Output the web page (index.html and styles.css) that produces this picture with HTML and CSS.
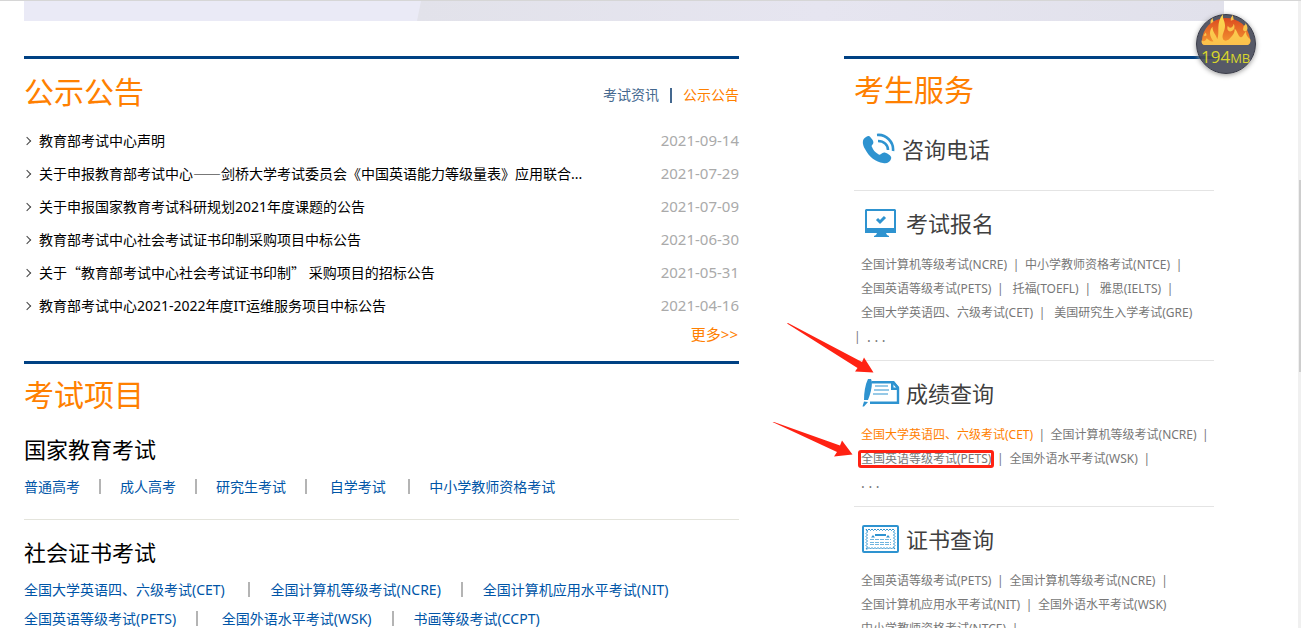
FILE: index.html
```html
<!DOCTYPE html>
<html lang="zh-CN">
<head>
<meta charset="utf-8">
<title>教育部考试中心</title>
<link rel="stylesheet" href="styles.css">
</head>
<body>
<div class="banner">
  <svg class="banner-art" viewBox="0 0 1200 20" preserveAspectRatio="none" aria-hidden="true"><defs><linearGradient id="bg" x1="0" x2="1"><stop offset="0" stop-color="#e2e2ea"/><stop offset=".5" stop-color="#e6e5f0"/><stop offset="1" stop-color="#e1e1eb"/></linearGradient></defs><path fill="url(#bg)" d="M397 0H1200V20H393Z"/></svg>
</div>
<div class="page">
  <main class="main">
    <section class="panel news">
      <header class="news-head">
        <h2 class="title">公示公告</h2>
        <nav class="tabs"><a class="tab" href="#">考试资讯</a><span class="tab-sep"></span><a class="tab tab-active" href="#">公示公告</a></nav>
      </header>
      <ul class="news-list">
        <li class="news-item"><a class="news-link" href="#">教育部考试中心声明</a><time class="date">2021-09-14</time></li>
        <li class="news-item"><a class="news-link" href="#">关于申报教育部考试中心<span class="cjk">——</span>剑桥大学考试委员会《中国英语能力等级量表》应用联合...</a><time class="date">2021-07-29</time></li>
        <li class="news-item"><a class="news-link" href="#">关于申报国家教育考试科研规划2021年度课题的公告</a><time class="date">2021-07-09</time></li>
        <li class="news-item"><a class="news-link" href="#">教育部考试中心社会考试证书印制采购项目中标公告</a><time class="date">2021-06-30</time></li>
        <li class="news-item"><a class="news-link" href="#">关于<span class="cjk">“</span>教育部考试中心社会考试证书印制<span class="cjk">”</span> 采购项目的招标公告</a><time class="date">2021-05-31</time></li>
        <li class="news-item"><a class="news-link" href="#">教育部考试中心2021-2022年度IT运维服务项目中标公告</a><time class="date">2021-04-16</time></li>
      </ul>
      <a class="more" href="#">更多&gt;&gt;</a>
    </section>
    <section class="panel">
      <h2 class="title title-projects">考试项目</h2>
      <div class="group">
        <h3 class="subtitle">国家教育考试</h3>
        <div class="links"><a href="#">普通高考</a><i class="bar"></i><a href="#">成人高考</a><i class="bar"></i><a href="#">研究生考试</a><i class="bar"></i><a href="#">&nbsp;自学考试&nbsp;</a><i class="bar"></i><a href="#">中小学教师资格考试</a></div>
      </div>
      <div class="group group-certs">
        <h3 class="subtitle">社会证书考试</h3>
        <div class="links"><a href="#">全国大学英语四、六级考试(CET)&nbsp;</a><i class="bar"></i><a href="#">全国计算机等级考试(NCRE)</a><i class="bar"></i><a href="#">全国计算机应用水平考试(NIT)</a></div>
        <div class="links"><a href="#">全国英语等级考试(PETS)</a><i class="bar"></i><a href="#">&nbsp;全国外语水平考试(WSK)</a><i class="bar"></i><a href="#">书画等级考试(CCPT)</a></div>
      </div>
    </section>
  </main>
  <aside class="panel side">
    <h2 class="title">考生服务</h2>
    <section class="service">
      <h3 class="service-title service-phone">
        <svg class="icon" viewBox="0 0 34 32" aria-hidden="true"><path fill="#2e93d0" d="M4 4C0 6 0 11 3 16c4 8 11 13 18 14 4 1 7-1 8-4 1-2-1-4-3-5-3-2-5-2-7 0-1 1-2 1-3 0-3-2-5-4-6-7-1-1 0-2 1-3 1-2 0-4-2-6C7 2 6 3 4 4Z"/><g fill="none" stroke="#2e93d0" stroke-width="2.6"><path d="M15 2c9-1 17 7 16 16M16 8c6 0 10 4 10 9"/></g></svg>
        咨询电话</h3>
    </section>
    <section class="service">
      <h3 class="service-title">
        <svg class="icon icon-wide" viewBox="0 0 38 32" aria-hidden="true"><path fill="#2e93d0" d="M4 2h29l1 1v23H24l1 2 2 1v1H12v-1l2-1 1-2H3V3Zm1 2v17h27V4Z"/><path d="m15 12 3 3 5-5" fill="none" stroke="#2e93d0" stroke-width="3"/></svg>
        考试报名</h3>
      <p class="row"><a href="#">全国计算机等级考试(NCRE)</a><b>|</b><a href="#">中小学教师资格考试(NTCE)</a><b>|</b></p>
      <p class="row"><a href="#">全国英语等级考试(PETS)</a><b>|</b><a href="#">&nbsp;托福(TOEFL)</a><b>|</b><a href="#">&nbsp;雅思(IELTS)</a><b>|</b></p>
      <p class="row"><a href="#">全国大学英语四、六级考试(CET)</a><b>|</b><a href="#">&nbsp;美国研究生入学考试(GRE)</a></p>
      <p class="row row-wrapped"><b>|</b><a class="dots" href="#">. . .</a></p>
    </section>
    <section class="service">
      <h3 class="service-title">
        <svg class="icon icon-wide" viewBox="0 0 38 32" aria-hidden="true"><path fill="none" stroke="#2e93d0" stroke-width="2.4" d="M10 5.200H31L36 11v14.800H8"/><path fill="#2e93d0" d="M29 4h3l5 6v3h-8Zm2.500 3v3.500h3Z"/><path fill="#2e93d0" d="m6 2 3 0 1 3c0 6-2 13-4 18l-4 0C2 16 3 8 6 2ZM2 24.500l4 .5-4 4.500H.5Z"/><path stroke="#2e93d0" stroke-width="1.200" d="M13 9h13M12 13h15M11 17h15"/></svg>
        成绩查询</h3>
      <p class="row"><a class="hot" href="#">全国大学英语四、六级考试(CET)</a><b>|</b><a href="#">全国计算机等级考试(NCRE)</a><b>|</b></p>
      <p class="row"><a class="marked" href="#">全国英语等级考试(PETS)</a><b>|</b><a href="#">全国外语水平考试(WSK)</a><b>|</b></p>
      <p class="row row-dots"><a class="dots" href="#">. . .</a></p>
    </section>
    <section class="service">
      <h3 class="service-title">
        <svg class="icon icon-wide" viewBox="0 0 38 32" aria-hidden="true"><rect x="1" y="3" width="35" height="26" rx="1" fill="#fff" stroke="#2e93d0" stroke-width="2"/><path fill="none" stroke="#2e93d0" stroke-width="1" d="m4 6 1.500 1.500L7 6l1.500 1.500L10 6l1.500 1.500L13 6l1.500 1.500L16 6l1.500 1.500L19 6l1.500 1.500L22 6l1.500 1.500L25 6l1.500 1.500L28 6l1.500 1.500L31 6l1.500 1.500L31.500 9 33 10.500 31.500 12 33 13.500 31.500 15 33 16.500 31.500 18 33 19.500 31.500 21 33 22.500 31.500 24 33 26l-2-1.500L29.500 26 28 24.500 26.500 26 25 24.500 23.500 26 22 24.500 20.500 26 19 24.500 17.500 26 16 24.500 14.500 26 13 24.500 11.500 26 10 24.500 8.500 26 7 24.500 5.500 26 4 26l1.500-2L4 22.500 5.500 21 4 19.500 5.500 18 4 16.500 5.500 15 4 13.500 5.500 12 4 10.500 5.500 9Z"/><path stroke="#2e93d0" stroke-width="2" d="M13 12h11"/><path fill="#2e93d0" d="M9 14.500l2-2.500 2 2.500ZM24 14.500l2-2.500 2 2.500Z"/><path stroke="#6fb5df" stroke-width="1" stroke-dasharray="4 1" d="M8 16.500h21M8 19.500h21M8 21.500h21"/></svg>
        证书查询</h3>
      <p class="row"><a href="#">全国英语等级考试(PETS)</a><b>|</b><a href="#">全国计算机等级考试(NCRE)</a><b>|</b></p>
      <p class="row"><a href="#">全国计算机应用水平考试(NIT)</a><b>|</b><a href="#">全国外语水平考试(WSK)</a></p>
      <p class="row"><a href="#">中小学教师资格考试(NTCE)</a><b>|</b></p>
    </section>
    <svg class="arrows" viewBox="772 322 104 136" aria-hidden="true"><g fill="#ff2213"><path d="M787 323.500 788 323 862 362 864 357.500 873.500 372.500 855 371.500 857.500 368Z"/><path d="M772.500 422 774 422 840 445.500 842 440.500 852.500 454.500 834 456.500 837 452Z"/></g></svg>
    <div class="meter">
      <svg class="flames" viewBox="0 0 60 34" aria-hidden="true"><defs><linearGradient id="fire" x1="0" y1="0" x2="0" y2="1"><stop offset="0" stop-color="#dc4a20"/><stop offset="1" stop-color="#f59a30"/></linearGradient><linearGradient id="glow" x1="0" y1="0" x2="0" y2="1"><stop offset="0" stop-color="#fbd94e"/><stop offset="1" stop-color="#fbc04c"/></linearGradient></defs><path fill="url(#fire)" d="M5 28C6 14 15 5 29 4c14 0 24 8 26 22 1 3-1 6-4 6H9c-3 0-4-1-4-4Z"/><path fill="url(#glow)" d="M5 27c1 2 4 1 5-2 3 2 4 4 7 3-4-5-5-10-1-15 0 6 4 8 5 13 3-7-2-17 6-26-1 5 2 7 2 12 0 6-4 9-2 14 2 3 6 1 8-2 2-2 4-4 4-9 3 3 3 7 6 9 3 0 3-4 6-6-1 4 3 7 4 8 1 4-1 6-4 6H9c-3 0-5-2-4-5Z"/><path fill="#f9c44c" d="m14 7 2-3 1 4-3 2ZM35 4l2-3 1 5-3 1ZM48 14c0-3 3-2 2-5 3 4 3 8 0 9-2 0-3-2-2-4ZM32 12c1 3 5 3 6-2 2 4 0 8-4 8-3-1-3-4-2-6ZM7 22l2-3 1 3-2 1Z"/></svg>
      <span class="meter-text">194<small>MB</small></span>
    </div>
  </aside>
</div>
<div class="scroll"><div class="scroll-thumb"></div></div>
</body>
</html>
```
FILE: styles.css
```css
* { box-sizing: border-box; }
body {
  margin: 0;
  height: 100vh;
  overflow: hidden;
  border-top: 1px solid #d6d6d6;
  background: #fff;
  color: #000;
  font: 14px/28px "Noto Sans", "Noto Sans CJK SC", sans-serif;
}
h2, h3, p, ul { margin: 0; padding: 0; font-weight: 400; }
a { color: inherit; text-decoration: none; }
.cjk { font-family: "Noto Sans CJK SC", sans-serif; }
.banner, .page { max-width: 1200px; margin: 0 53px 0 24px; }
.banner { background: #eaeaf6; height: 20px; }
.banner-art { display: block; width: 100%; height: 100%; }
.page {
  display: grid;
  grid-template-columns: minmax(0, 715fr) minmax(0, 380fr);
  gap: 105px;
  align-items: start;
  padding-top: 35px;
}
.panel { border-top: 3px solid #004183; }
.title { color: #ff8000; font-size: 30px; line-height: 40px; }
.news { padding-top: 13px; }
.news-head { display: flex; justify-content: space-between; align-items: center; margin-bottom: 12px; }
.tabs { display: flex; align-items: center; padding-top: 6px; color: #44688f; }
.tab-sep { width: 2px; height: 15px; margin: 0 11px; background: #44688f; }
.tab-active { color: #ff8000; }
.news-list { list-style: none; }
.news-item { display: flex; align-items: center; height: 33px; white-space: nowrap; }
.news-item::before {
  content: "";
  width: 5px;
  height: 5px;
  margin-right: 9px;
  border: solid #444;
  border-width: 1px 1px 0 0;
  transform: rotate(45deg);
}
.date { margin-left: auto; color: #aaa; font-size: 15px; line-height: 26px; padding-bottom: 2px; }
.more { display: block; margin: -2px 1px 13px; text-align: right; color: #ff8000; font-size: 15px; }
.title-projects { padding-top: 11px; }
.group { padding: 16px 0 18px; }
.group + .group { border-top: 1px solid #e4e4dc; }
.title-projects + .group { padding-top: 18px; }
.subtitle { margin-bottom: 7px; font-size: 22px; line-height: 32px; }
.links { display: flex; align-items: center; height: 29px; color: #0055a7; white-space: nowrap; }
.bar { width: 2px; height: 15px; margin: 0 19px; background: #b4b4b4; }
.group-certs .bar { margin: 0 20px; }
.side { position: relative; padding: 11px 10px 0; white-space: nowrap; }
.service { padding: 15px 0 11px; color: #777; font-size: 12px; }
.service + .service { border-top: 1px solid #e4e4e4; }
.service-title {
  display: flex;
  align-items: center;
  gap: 6px;
  padding-left: 8px;
  margin-bottom: 13px;
  color: #3f3f3f;
  font-size: 22px;
  line-height: 34px;
}
.service-phone { padding-top: 7px; }
.icon { width: 34px; height: 32px; }
.icon-wide { width: 38px; }
.row { display: flex; align-items: center; height: 24px; padding-left: 7px; }
.row b { width: 18px; font-weight: 400; text-align: center; }
.row-wrapped { padding-left: 0; }
.row-wrapped b { width: 4px; margin-right: 9px; }
.dots { font-size: 14px; line-height: 24px; }
.hot { color: #ff8000; }
.marked { position: relative; }
.marked::after {
  content: "";
  position: absolute;
  inset: 5px -3px;
  border: 3px solid #ff2213;
  border-radius: 3px;
}
.arrows { position: absolute; left: -72px; top: 263px; width: 104px; height: 136px; }
.meter {
  position: absolute;
  top: -45px;
  right: -32px;
  width: 60px;
  height: 60px;
  border: 1px solid #3b3d49;
  border-radius: 50%;
  background: rgb(72 75 90 / 92%);
  box-shadow: 0 1px 5px #999;
  text-align: center;
}
.flames { position: absolute; left: 0; top: -1px; width: 58px; height: 33px; }
.meter-text { position: absolute; left: 4px; top: 28px; color: #d8d62b; font: 17px/28px "Open Sans", "Noto Sans", sans-serif; }
.meter-text small { font-size: 13px; }
.scroll { position: fixed; top: 1px; right: 0; bottom: 0; width: 3px; padding-left: 1px; background: #f0f0f0; }
.scroll-thumb { height: 192px; margin-top: 179px; background: #cdcdcd; }
```
